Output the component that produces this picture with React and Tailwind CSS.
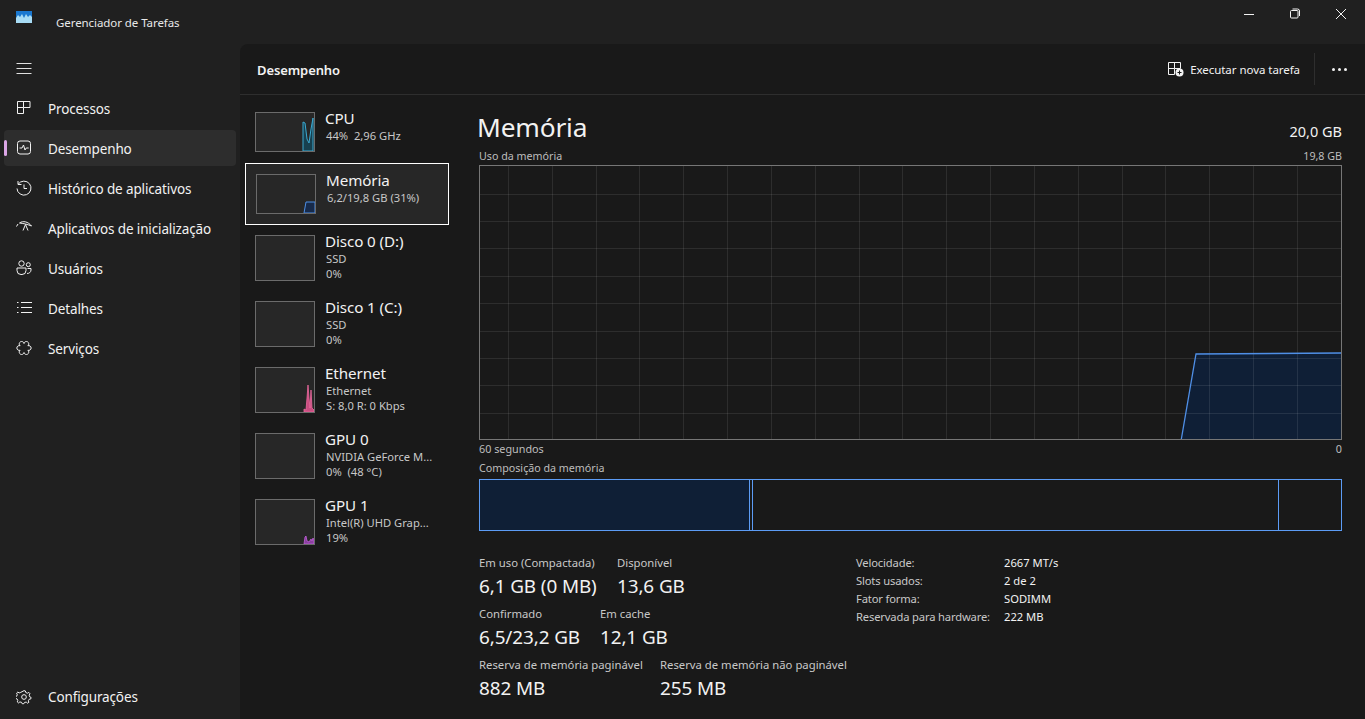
import React from "react";

const Icon = ({ children, className = "" }) => (
  <svg width="16" height="16" viewBox="0 0 16 16" fill="none" stroke="#f2f2f2" strokeWidth="1" className={`shrink-0 ${className}`}>
    {children}
  </svg>
);

const navItems = [
  {
    label: "Processos",
    icon: <path d="M1.5 1.5h12.500v6h-6.500v6h-6z M1.5 7.5h6 M7.5 1.5v6" />,
  },
  {
    label: "Desempenho",
    active: true,
    icon: (
      <>
        <rect x="1.5" y="1" width="13" height="13" rx="2.5" />
        <path d="M3.5 8h2.500l1.500-3 1.500 5 1.200-2h2.500" />
      </>
    ),
  },
  {
    label: "Histórico de aplicativos",
    icon: (
      <>
        <path d="M2.200 4.200A7 7 0 1 1 1 8.500 M2 1v3.500h3.500" />
        <path d="M8 4.500V8.500h3" />
      </>
    ),
  },
  {
    label: "Aplicativos de inicialização",
    icon: (
      <>
        <path d="M0.500 6.500l1.500-2.500 M3.500 3C7 0.500 12 1.500 15.500 6 12 4.500 8 3.500 3.500 3z" />
        <path d="M9.500 4.500L7 10.500 M9.500 4.500l2.500 6" />
      </>
    ),
  },
  {
    label: "Usuários",
    icon: (
      <>
        <circle cx="5.500" cy="3.500" r="2.700" />
        <circle cx="12.300" cy="4.700" r="2" />
        <path d="M1 8h9v2.500a4 4 0 0 1-4 4h-1a4 4 0 0 1-4-4z" />
        <path d="M11.500 8.500H15v1.500a3.500 3.500 0 0 1-4 3.400" />
      </>
    ),
  },
  {
    label: "Detalhes",
    icon: <path d="M5 2.500h11 M5 7.500h11 M5 12.500h11 M1 2.500h1.500 M1 7.500h1.500 M1 12.500h1.500" strokeWidth="1.200" />,
  },
  {
    label: "Serviços",
    icon: (
      <path d="M8 3.500A2.400 2.400 0 1 1 11.900 5.750 2.400 2.400 0 1 1 11.900 10.250 2.400 2.400 0 1 1 8 12.500 2.400 2.400 0 1 1 4.100 10.250 2.400 2.400 0 1 1 4.100 5.750 2.400 2.400 0 1 1 8 3.500z" />
    ),
  },
];

const Thumb = ({ tall, children }) => (
  <div className={`w-[60px] shrink-0 border border-[#6b6b6b] bg-[#272727] ${tall ? "h-[46px]" : "h-[40px]"}`}>
    {children && (
      <svg width="58" height={tall ? 44 : 38} className="block">
        {children}
      </svg>
    )}
  </div>
);

const perfItems = [
  {
    name: "CPU",
    lines: ["44%  2,96 GHz"],
    spark: (
      <path d="M47 38V9L49 10 51 26 53 30 55 16 57 5V38z" fill="#17404f" stroke="#3ba8d0" strokeWidth="1" />
    ),
  },
  {
    name: "Memória",
    lines: ["6,2/19,8 GB (31%)"],
    selected: true,
    spark: <path d="M47 38L49 27H58V38z" fill="#172a4a" stroke="#4d8fe6" strokeWidth="1" />,
  },
  { name: "Disco 0 (D:)", lines: ["SSD", "0%"], tall: true },
  { name: "Disco 1 (C:)", lines: ["SSD", "0%"], tall: true },
  {
    name: "Ethernet",
    lines: ["Ethernet", "S: 8,0 R: 0 Kbps"],
    tall: true,
    spark: (
      <path d="M48 44V41L50 42 51 30 52 17 53 30 54 40 55 22 56 40 58 42V44z" fill="#c94d80" stroke="#ec6aa0" strokeWidth="0.8" />
    ),
  },
  { name: "GPU 0", lines: ["NVIDIA GeForce M...", "0%  (48 °C)"], tall: true },
  {
    name: "GPU 1",
    lines: ["Intel(R) UHD Grap...", "19%"],
    tall: true,
    spark: <path d="M48 44L49 37 50 36 51 41 53 42 55 39 56 41 57 38 58 40V44z" fill="#8a3fa0" stroke="#c060d8" strokeWidth="0.8" />,
  },
];

const stats = [
  [
    { label: "Em uso (Compactada)", value: "6,1 GB (0 MB)", w: "w-[138px]" },
    { label: "Disponível", value: "13,6 GB" },
  ],
  [
    { label: "Confirmado", value: "6,5/23,2 GB", w: "w-[121px]" },
    { label: "Em cache", value: "12,1 GB" },
  ],
  [
    { label: "Reserva de memória paginável", value: "882 MB", w: "w-[181px]" },
    { label: "Reserva de memória não paginável", value: "255 MB" },
  ],
];

const specs = [
  ["Velocidade:", "2667 MT/s"],
  ["Slots usados:", "2 de 2"],
  ["Fator forma:", "SODIMM"],
  ["Reservada para hardware:", "222 MB"],
];

const UsageGraph = () => {
  const verticals = Array.from({ length: 19 }, (_, i) => 29 + i * 43.83);
  const horizontals = Array.from({ length: 9 }, (_, i) => 27.5 + i * 27.4);
  return (
    <svg width="863" height="275" className="block border border-[#767676]">
      <path d="M701 275L716 188L861 187V275z" fill="#0f1f36" />
      {verticals.map((x) => (
        <line key={x} x1={Math.round(x) - 0.5} x2={Math.round(x) - 0.5} y1="0" y2="275" stroke="#ffffff" strokeOpacity="0.09" />
      ))}
      {horizontals.map((y) => (
        <line key={y} x1="0" x2="861" y1={Math.round(y) + 0.5} y2={Math.round(y) + 0.5} stroke="#ffffff" strokeOpacity="0.09" />
      ))}
      <path d="M701 275L716 188L861 187" stroke="#4f8fe6" strokeWidth="1.300" fill="none" />
    </svg>
  );
};

export default function App() {
  return (
    <div className="w-[1365px] h-[719px] overflow-hidden flex flex-col bg-[#202020] text-[#f2f2f2] font-['Noto_Sans','Open_Sans',sans-serif]">
      {/* Title bar */}
      <div className="h-[44px] shrink-0 flex items-center">
        <svg width="16" height="12" viewBox="0 0 16 12" className="ml-4 -mt-[10px]">
          <rect width="16" height="12" fill="#1a78d0" />
          <path d="M0 12V7L2 4 4 6 6 3 8 7 10 3 12 6 14 4 16 6V12z" fill="#a8dcf5" />
        </svg>
        <span className="ml-6 mt-[1px] text-[11.5px] tracking-[-0.07px] text-[#e8e8e8]">Gerenciador de Tarefas</span>
        <div className="ml-auto pr-[1px] flex items-center">
          <div className="w-[46px] flex justify-center -mt-[16px]">
            <svg width="12" height="12" viewBox="0 0 12 12" stroke="#f2f2f2">
              <path d="M1 6.500h10" />
            </svg>
          </div>
          <div className="w-[46px] flex justify-center -mt-[16px]">
            <svg width="12" height="12" viewBox="0 0 12 12" fill="none" stroke="#f2f2f2">
              <rect x="1.500" y="2.500" width="7.500" height="7.500" rx="1" />
              <path d="M3.500 1h5a2 2 0 0 1 2 2v5" />
            </svg>
          </div>
          <div className="w-[46px] flex justify-center -mt-[16px]">
            <svg width="12" height="12" viewBox="0 0 12 12" stroke="#f2f2f2">
              <path d="M1 1l10 10 M11 1L1 11" />
            </svg>
          </div>
        </div>
      </div>

      <div className="flex-1 flex min-h-0">
        {/* Sidebar */}
        <aside className="w-[240px] shrink-0 flex flex-col">
          <div className="h-[48px] pl-4 flex items-center">
            <svg width="16" height="16" viewBox="0 0 16 16" stroke="#e0e0e0">
              <path d="M0.500 3.500h15 M0.500 8.500h15 M0.500 13.500h15" />
            </svg>
          </div>
          <nav className="flex flex-col gap-1 px-1 mt-[-2px]">
            {navItems.map((item) => (
              <div
                key={item.label}
                className={`h-[36px] relative flex items-center pl-3 rounded-[4px] text-[13.5px] ${item.active ? "bg-[#2d2d2d]" : ""}`}
              >
                {item.active && <div className="absolute left-0 top-[10px] w-[3px] h-[16px] rounded-full bg-[#dba6e6]" />}
                <Icon>{item.icon}</Icon>
                <span className="ml-4 mt-[2px] tracking-[-0.13px]">{item.label}</span>
              </div>
            ))}
          </nav>
          <div className="mt-auto h-[44px] pl-4 flex items-center text-[13.5px]">
            <svg width="16" height="16" viewBox="0 0 24 24" fill="none" stroke="#f2f2f2" strokeWidth="1.500">
              <path d="M12 2.500l2 .4.700 2.400 2.400 1 2.200-1.200 1.600 1.900-1.200 2.200.7 2.400 2.200 1-.4 2.300-2.400.5-1.300 2.200.8 2.400-2 1.300-1.900-1.600-2.400.3-1.300 2.100h-2.400l-1.100-2.200-2.400-.5-2 1.500-1.900-1.500.8-2.400-1.200-2.200-2.400-.7-.2-2.400 2.200-.9.800-2.300-1-2.300 1.800-1.600 2.100 1.300 2.400-.9z" strokeLinejoin="round" />
              <circle cx="12" cy="12" r="3.500" />
            </svg>
            <span className="ml-4 tracking-[-0.13px]">Configurações</span>
          </div>
        </aside>

        {/* Main panel */}
        <main className="flex-1 min-w-0 flex flex-col bg-[#191919] rounded-tl-lg">
          <header className="h-[51px] shrink-0 flex items-center border-b border-[#2e2e2e] pl-[17px] pr-[18px]">
            <h1 className="text-[13px] mt-[3px] font-semibold tracking-[-0.1px]">Desempenho</h1>
            <div className="ml-auto flex items-center">
              <svg width="18" height="16" viewBox="0 0 18 16" fill="none" stroke="#f2f2f2">
                <path d="M1.500 1.500h12v6h-6v6h-6z M1.500 7.500h6 M7.500 1.500v6" />
                <circle cx="12.500" cy="11.500" r="4" fill="#f2f2f2" stroke="none" />
                <path d="M10.500 11.500h4 M12.500 9.500v4" stroke="#191919" />
              </svg>
              <span className="ml-[5px] mt-[1px] text-[11.5px] tracking-[-0.05px]">Executar nova tarefa</span>
              <div className="ml-[14px] h-[32px] w-px bg-[#2e2e2e]" />
              <div className="ml-[17px] flex gap-[3px]">
                <div className="w-[3px] h-[3px] rounded-full bg-[#f2f2f2]" />
                <div className="w-[3px] h-[3px] rounded-full bg-[#f2f2f2]" />
                <div className="w-[3px] h-[3px] rounded-full bg-[#f2f2f2]" />
              </div>
            </div>
          </header>

          <div className="flex-1 flex min-h-0">
            {/* Device list */}
            <div className="w-[239px] shrink-0 pl-[5px] pt-[10px] flex flex-col gap-1">
              {perfItems.map((item) => (
                <div
                  key={item.name}
                  className={`w-[204px] shrink-0 flex items-center gap-[10px] pl-[10px] ${item.name === "CPU" ? "h-[54px]" : "h-[62px]"} ${item.selected ? "border border-white bg-[#272727] -mb-[2px]" : ""}`}
                >
                  <Thumb tall={item.tall}>{item.spark}</Thumb>
                  <div className={`min-w-0 ${item.tall ? "mb-[4px]" : "mb-[12px]"}`}>
                    <div className="text-[15.2px] leading-[19px] tracking-[-0.1px] whitespace-nowrap">{item.name}</div>
                    {item.lines.map((line) => (
                      <div key={line} className="ml-[1px] text-[11.2px] leading-[15px] text-[#c8c8c8] whitespace-pre">
                        {line}
                      </div>
                    ))}
                  </div>
                </div>
              ))}
            </div>

            {/* Memory detail */}
            <div className="flex-1 min-w-0 pr-[23px] flex flex-col">
              <div className="flex items-end justify-between h-[45px] mt-[9px]">
                <h2 className="text-[26.3px] leading-[36px] mb-[4px] -ml-[2px] tracking-[-0.2px]">Memória</h2>
                <span className="text-[14.5px] leading-[20px] mb-[8px]">20,0 GB</span>
              </div>
              <div className="flex justify-between text-[10.7px] leading-[14px] text-[#bdbdbd] h-[16px]">
                <span>Uso da memória</span>
                <span>19,8 GB</span>
              </div>
              <UsageGraph />
              <div className="flex justify-between text-[10.8px] leading-[14px] text-[#bdbdbd] mt-[2px]">
                <span>60 segundos</span>
                <span>0</span>
              </div>
              <div className="text-[10.7px] leading-[14px] text-[#bdbdbd] mt-[5px] mb-[4px]">Composição da memória</div>
              <div className="h-[52px] flex border border-[#5c9cf5]">
                <div className="w-[270px] bg-[#0f1f36] border-r border-[#5c9cf5]" />
                <div className="w-[3px] border-r border-[#5c9cf5]" />
                <div className="w-[526px] border-r border-[#5c9cf5]" />
                <div className="flex-1" />
              </div>

              <div className="flex mt-[24px]">
                <div className="w-[377px] flex flex-col gap-[6px]">
                  {stats.map((row) => (
                    <div key={row[0].label} className="flex">
                      {row.map((s) => (
                        <div key={s.label} className={s.w}>
                          <div className="text-[11.3px] leading-[16px] text-[#c8c8c8] whitespace-nowrap">{s.label}</div>
                          <div className="mt-[1px] text-[18.9px] leading-[28px] whitespace-nowrap tracking-[-0.1px]">{s.value}</div>
                        </div>
                      ))}
                    </div>
                  ))}
                </div>
                <div className="grid grid-cols-[148px_1fr] auto-rows-[18px] text-[11.2px] leading-[16px] content-start">
                  {specs.map(([k, v]) => (
                    <React.Fragment key={k}>
                      <span className="text-[#c8c8c8] whitespace-nowrap tracking-[-0.15px]">{k}</span>
                      <span className="whitespace-nowrap">{v}</span>
                    </React.Fragment>
                  ))}
                </div>
              </div>
            </div>
          </div>
        </main>
      </div>
    </div>
  );
}
